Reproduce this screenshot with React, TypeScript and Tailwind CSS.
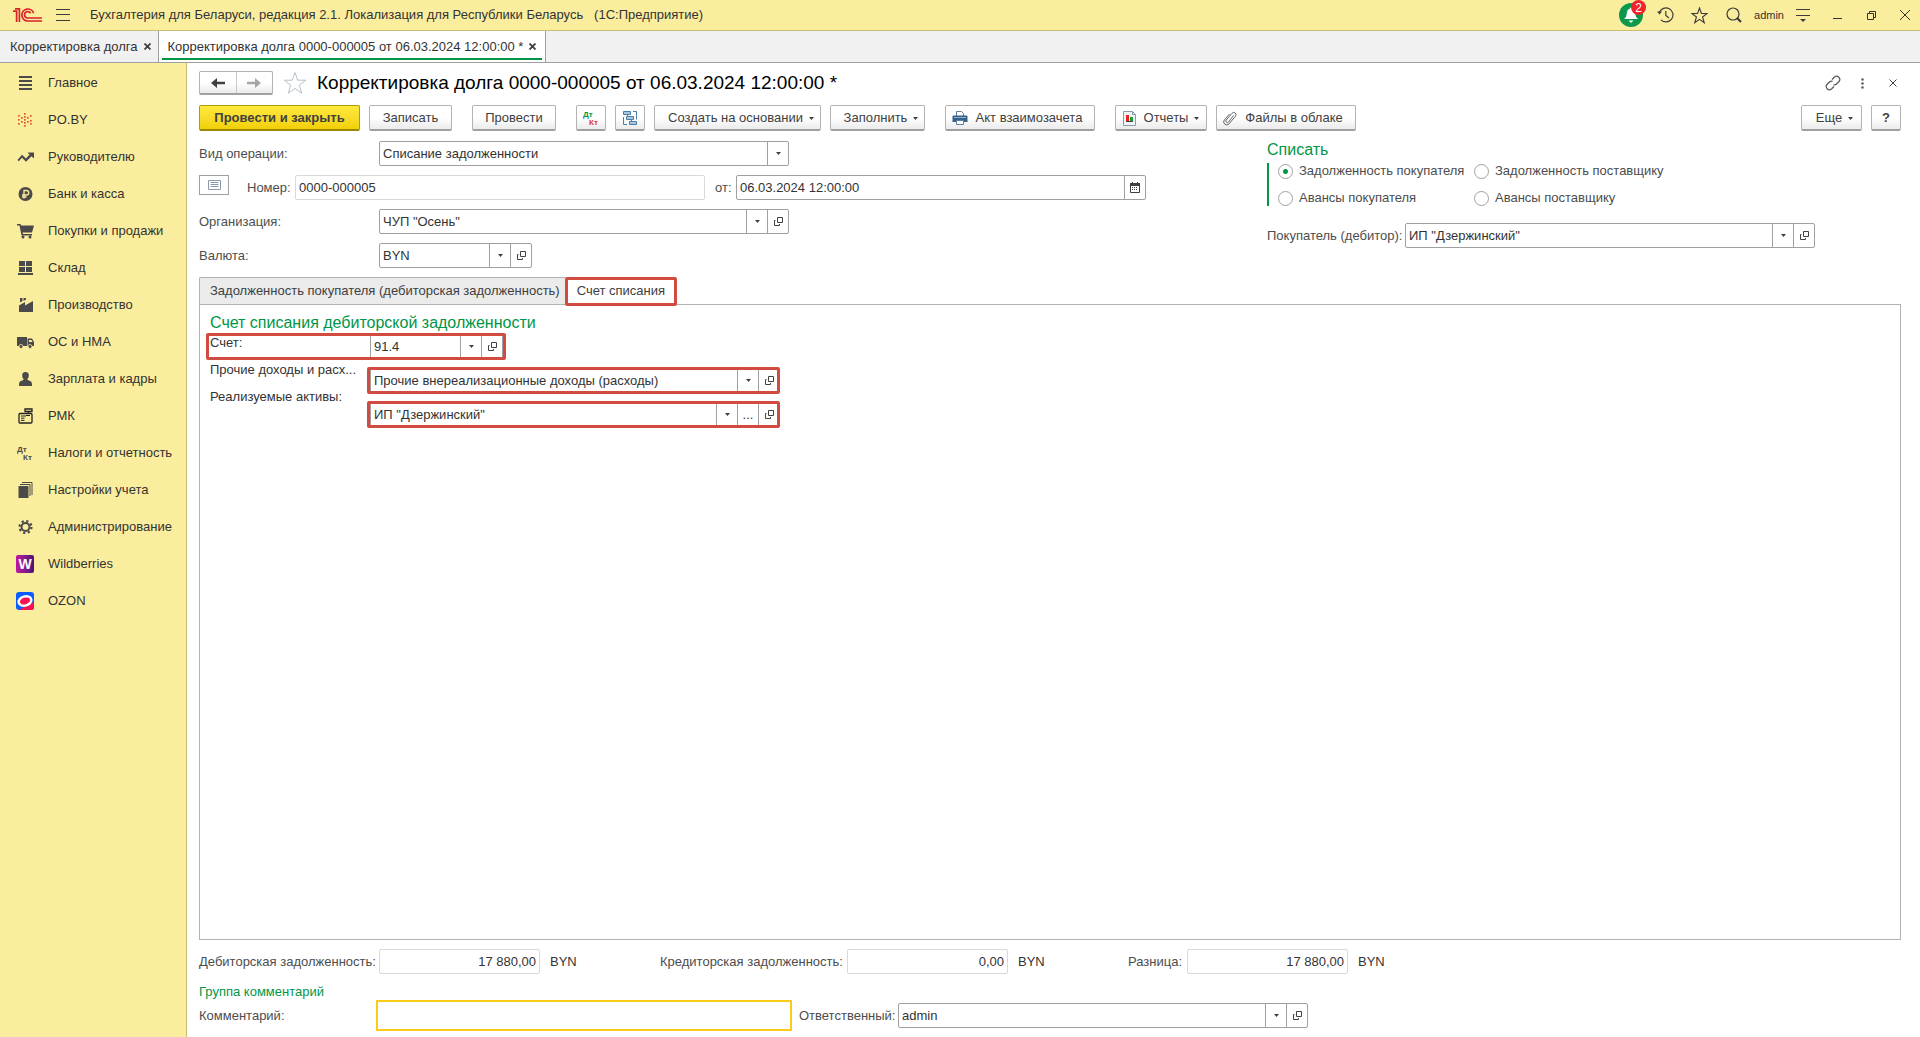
import React from 'react';
import clsx from 'clsx';

// ---------- icons ----------

const LogoIcon = () => (
  <svg width="31" height="16" viewBox="0 0 31 16" fill="none" stroke="#d8232a" strokeWidth="1.7">
    <path d="M1 4.2H4.6V15M3 1.8H7.4V15" />
    <path d="M21.6 6.2A6 6 0 1 0 15.6 14H30" />
    <path d="M18.6 6.4A3.2 3.2 0 1 0 15.6 11H30" />
  </svg>
);

const OpenIcon = () => (
  <svg width="11" height="11" viewBox="0 0 11 11" fill="none" stroke="#404040">
    <path d="M4.5 1.5h5v5h-5z" />
    <path d="M2.5 4.5h-1v5h5v-1.5" />
  </svg>
);

const ArrowDown = () => (
  <svg width="5" height="3" viewBox="0 0 5 3" fill="#404040">
    <path d="M0 0h5L2.5 3z" />
  </svg>
);

const CalendarIcon = () => (
  <svg width="10" height="11" viewBox="0 0 10 11">
    <path d="M.5 1.5h9v9h-9z" fill="none" stroke="#404040" />
    <path d="M0 1h10v3H0zM2 0h1v2H2zM7 0h1v2H7z" fill="#404040" />
    <path d="M2 5.5h6M2 7.5h6" stroke="#404040" strokeDasharray="1 1" />
  </svg>
);

const StarIcon = ({ size, color }: { size: number; color: string }) => (
  <svg width={size} height={size} viewBox="0 0 24 24" fill="none" stroke={color} strokeWidth={size > 20 ? 1 : 1.6}>
    <path d="M12 1.5L14.7 9.2H22.8L16.3 14.1L18.7 22.2L12 17.4L5.3 22.2L7.7 14.1L1.2 9.2H9.3Z" />
  </svg>
);

const BellIcon = () => (
  <svg width="16" height="18" viewBox="0 0 16 18" fill="#fff">
    <path d="M8 1.5q1.2 0 1.2 1.3Q12 3.6 12.2 7.500q.1 3.500 2.800 5.500H1q2.700-2 2.800-5.500Q4 3.600 6.800 2.800 6.800 1.500 8 1.500z" />
    <path d="M5.500 14.500h5L8 17z" />
  </svg>
);

const HistoryIcon = () => (
  <svg width="17" height="16" viewBox="0 0 17 16" fill="none" stroke="#3c3c3c" strokeWidth="1.2">
    <path d="M2.4 5.5A7 7 0 1 1 4 12.8" />
    <path d="M8.8 4v4.5l3.2 2.5" />
    <path d="M0 4.500h5L2.5 7.5z" fill="#3c3c3c" stroke="none" />
  </svg>
);

const SearchIcon = () => (
  <svg width="16" height="16" viewBox="0 0 16 16" fill="none" stroke="#3c3c3c" strokeWidth="1.2">
    <circle cx="7" cy="7" r="6" />
    <path d="M11 11l4 4" strokeWidth="2.2" />
  </svg>
);

const LinkIcon = () => (
  <svg width="16" height="16" viewBox="0 0 16 16" fill="none" stroke="#555" strokeWidth="1.2">
    <path d="M7 4.500L9.500 2a3.200 3.200 0 0 1 4.500 4.500L11.500 9q-1.500 1.300-3 .6" />
    <path d="M9 11.500L6.500 14A3.200 3.200 0 0 1 2 9.500L4.500 7q1.500-1.300 3-.6" />
  </svg>
);

const DtKtIcon = ({ top, bottom }: { top: string; bottom: string }) => (
  <svg width="17" height="16" viewBox="0 0 17 16" fontFamily="Liberation Sans, sans-serif" fontWeight="bold" fontSize="8">
    <text x="0" y="7" fill={top}>Дт</text>
    <text x="6" y="15" fill={bottom}>Кт</text>
  </svg>
);

const StructureIcon = () => (
  <svg width="16" height="16" viewBox="0 0 16 16" fill="#a9c6de" stroke="#4a7fab">
    <path d="M1.5 1.5h7v3h-7zM4.5 6.5h7v3h-7zM7.5 11.5h7v3h-7z" />
    <path d="M11 1.5h3.5v8M1.5 7v7.5H5" fill="none" />
    <path d="M5.5 4.5v2M9.500 9.5v2" />
  </svg>
);

const PrinterIcon = () => (
  <svg width="16" height="16" viewBox="0 0 16 16">
    <path d="M4.5 6V1.5h5l2 2V6" fill="#fff" stroke="#5c7f9e" />
    <path d="M1.5 5.5h13a1 1 0 0 1 1 1V12H.5V6.5a1 1 0 0 1 1-1z" fill="#33628c" />
    <path d="M2 7.5h12" stroke="#8fb0cc" />
    <path d="M4.5 10.5h7v4h-7z" fill="#fff" stroke="#5c7f9e" />
  </svg>
);

const ReportIcon = () => (
  <svg width="13" height="15" viewBox="0 0 13 15">
    <path d="M.5 .5h9l3 3v11H.5z" fill="#eef4f8" stroke="#8a9aa8" />
    <path d="M9.5 .5v3h3" fill="none" stroke="#8a9aa8" />
    <path d="M3 4h3v6H3z" fill="#f02020" />
    <path d="M7 6h3v4H7z" fill="#18a038" />
    <path d="M3 10.500h7" stroke="#444" />
  </svg>
);

const ClipIcon = () => (
  <svg width="14" height="15" viewBox="0 0 14 15" fill="none" stroke="#666">
    <path d="M10.500 4.500L5.500 11a1.500 1.500 0 0 1-2.300-2L9 2.300a2.200 2.200 0 0 1 3.500 2.900L6 12.800a3 3 0 0 1-4.600-3.900L6.500 3" />
  </svg>
);

const dots = [[6, 0], [6, 3], [6, 6], [6, 9], [6, 12], [3, 4], [3, 8], [9, 4], [9, 8], [0, 2], [0, 10], [12, 2], [12, 10], [12, 7], [0, 6]];

const sections: { title: string; icon: React.ReactNode }[] = [
  { title: 'Главное', icon: <path d="M2 1h13v2H2zM2 5h13v2H2zM2 9h13v2H2zM2 13h13v2H2z" /> },
  {
    title: 'PO.BY',
    icon: <g fill="#dd5a2c">{dots.map(([x, y]) => <rect key={`${x}-${y}`} x={x + 1} y={y + 1} width="1.7" height="1.7" />)}</g>,
  },
  {
    title: 'Руководителю',
    icon: <path d="M.5 11L5 5.800l4 3.700 3.500-4L10.500 3.500H17v6L14.500 7.300 9 12.700 5 8.800 1.800 12.200z" />,
  },
  {
    title: 'Банк и касса',
    icon: (
      <>
        <circle cx="8.5" cy="8" r="7" />
        <path d="M7 12.5V4.5h2.5a2.2 2.2 0 0 1 0 4.5H5M5 11h4.5" fill="none" stroke="#fbed9e" strokeWidth="1.3" />
      </>
    ),
  },
  {
    title: 'Покупки и продажи',
    icon: (
      <>
        <path d="M0 1h3.5l.6 1.5H17L15 9.5H5.5L6 11h9v1.5H4.5L2.5 2.5H0z" />
        <circle cx="6" cy="14" r="1.5" />
        <circle cx="13" cy="14" r="1.5" />
      </>
    ),
  },
  { title: 'Склад', icon: <path d="M2 1h6v5H2zM9 1h6v5H9zM2 7h6v5H2zM9 7h6v5H9zM1 13h15v2H1z" /> },
  { title: 'Производство', icon: <path d="M2 15V8.500l6-3.500v3.500L16 4v11zM3 1h2.500v3L3 5.500zM6.500 1H9v1.500L6.500 4z" /> },
  {
    title: 'ОС и НМА',
    icon: (
      <>
        <path d="M0 3h10v9H0zM10.5 4.5H15L17 8v4h-6.5z" />
        <path d="M12 6h2.5l1 2H12z" fill="#fbed9e" />
        <circle cx="4" cy="12.5" r="2" stroke="#fbed9e" strokeWidth=".8" />
        <circle cx="13" cy="12.5" r="2" stroke="#fbed9e" strokeWidth=".8" />
      </>
    ),
  },
  {
    title: 'Зарплата и кадры',
    icon: <path d="M8.5 1a3.3 3.3 0 0 1 3.300 3.500C11.800 6.500 10.800 8 10 8.500L14 10.500q1 .5 1 4.500H2q0-4 1-4.500L7 8.500C6.200 8 5.200 6.500 5.200 4.500A3.300 3.300 0 0 1 8.5 1z" />,
  },
  {
    title: 'РМК',
    icon: (
      <g fill="none" stroke="#222" strokeWidth="1.3">
        <rect x="2" y="5.500" width="13" height="9.500" rx="1" />
        <path d="M8 1h7v2.500H8zM11.500 3.500v2" />
        <path d="M4 8h5M4 10.200h3.500M4 12.400h3.500M9 7.500h4" strokeWidth="1" />
      </g>
    ),
  },
  { title: 'Налоги и отчетность', icon: null },
  {
    title: 'Настройки учета',
    icon: (
      <>
        <path d="M1.500 4h10v12h-10z" />
        <path d="M3 2.500h10V14M5 .5h10V13" fill="none" stroke="#4a4a4a" />
      </>
    ),
  },
  {
    title: 'Администрирование',
    icon: (
      <g fill="none" stroke="#4a4a4a">
        <circle cx="8.5" cy="8" r="4" strokeWidth="2" />
        <circle cx="8.5" cy="8" r="6" strokeWidth="2.2" strokeDasharray="2.2 2.512" />
      </g>
    ),
  },
  { title: 'Wildberries', icon: null },
  { title: 'OZON', icon: null },
];

function SectionIcon({ title, icon }: { title: string; icon: React.ReactNode }) {
  if (title === 'Налоги и отчетность') return <DtKtIcon top="#4a4a4a" bottom="#4a4a4a" />;
  if (title === 'Wildberries') {
    return (
      <span className="flex size-[18px] items-center justify-center rounded-xs bg-linear-to-r from-[#c3119f] to-[#4b1178] text-sm font-bold text-white">
        W
      </span>
    );
  }
  if (title === 'OZON') {
    return (
      <svg width="18" height="18" viewBox="0 0 18 18">
        <rect width="18" height="18" rx="3" fill="#0a5cff" />
        <path d="M3 18L18 10v5a3 3 0 0 1-3 3z" fill="#f91155" />
        <ellipse cx="9" cy="9" rx="6.5" ry="4.5" transform="rotate(-15 9 9)" fill="#f91155" stroke="#fff" strokeWidth="2.4" />
      </svg>
    );
  }
  return (
    <svg width="17" height="16" viewBox="0 0 17 16" fill="#4a4a4a">
      {icon}
    </svg>
  );
}

// ---------- controls ----------

type FieldButton = 'list' | 'more' | 'open' | 'calendar';

const buttonIcons: Record<FieldButton, React.ReactNode> = {
  list: <ArrowDown />,
  more: '...',
  open: <OpenIcon />,
  calendar: <CalendarIcon />,
};

const buttonLabels: Record<FieldButton, string> = {
  list: 'Выбрать из списка',
  more: 'Выбрать',
  open: 'Открыть',
  calendar: 'Календарь',
};

interface FieldProps {
  id: string;
  value: string;
  buttons?: FieldButton[];
  className?: string;
  readOnly?: boolean;
  right?: boolean;
}

function Field({ id, value, buttons = [], className, readOnly, right }: FieldProps) {
  return (
    <div className={clsx('flex h-[25px] rounded-xs border bg-white', readOnly ? 'border-[#d9d9d9]' : 'border-[#a0a0a0]', className)}>
      <input
        id={id}
        defaultValue={value}
        readOnly={readOnly}
        className={clsx('min-w-0 flex-1 bg-transparent px-[3px] text-[#333] outline-none', right && 'text-right')}
      />
      {buttons.map((b) => (
        <button key={b} type="button" aria-label={buttonLabels[b]} className="flex w-[21px] shrink-0 items-center justify-center border-l border-[#a0a0a0]">
          {buttonIcons[b]}
        </button>
      ))}
    </div>
  );
}

// red frame drawn over a field
const Highlight = ({ className }: { className: string }) => (
  <span className={clsx('pointer-events-none absolute -inset-y-px rounded-xs border-3 border-[#d14b40]', className)} />
);

interface ToolButtonProps {
  children: React.ReactNode;
  className?: string;
  menu?: boolean;
  primary?: boolean;
  label?: string;
}

function ToolButton({ children, className, menu, primary, label }: ToolButtonProps) {
  return (
    <button
      type="button"
      aria-label={label}
      className={clsx(
        'flex h-[26px] shrink-0 items-center justify-center rounded-xs border border-b-2 bg-linear-to-b pt-px text-[#404040]',
        primary
          ? 'border-[#b39b00] border-b-[#9c8700] from-[#ffe93c] to-[#f2d000] font-bold'
          : 'border-[#b3b3b3] border-b-[#a0a0a0] from-white from-50% to-[#ebebeb]',
        className,
      )}
    >
      {children}
      {menu && <span className="ml-[6px]"><ArrowDown /></span>}
    </button>
  );
}

function Radio({ label, checked }: { label: string; checked?: boolean }) {
  return (
    <label className="flex items-center gap-[6px]">
      <input
        type="radio"
        name="writeoff"
        defaultChecked={checked}
        className="size-[15px] appearance-none rounded-full border border-[#a0a0a0] bg-white checked:bg-[radial-gradient(circle,#009646_0_2px,#fff_3px)]"
      />
      {label}
    </label>
  );
}

// ---------- page ----------

function TitleBar() {
  return (
    <header className="flex h-[31px] items-center border-b border-[#c9bd72] bg-[#fbed9e] pr-[10px] pl-[12px] text-[#333]">
      <LogoIcon />
      <button type="button" aria-label="Главное меню" className="ml-[13px]">
        <svg width="14" height="12" viewBox="0 0 14 12" stroke="#3c3c3c">
          <path d="M0 .5h14M0 5.5h14M0 11.500h14" />
        </svg>
      </button>
      <h1 className="ml-5 whitespace-pre">Бухгалтерия для Беларуси, редакция 2.1. Локализация для Республики Беларусь   (1С:Предприятие)</h1>
      <div className="ml-auto flex items-center">
        <button type="button" aria-label="Уведомления" className="relative mr-[14px] flex size-6 items-center justify-center rounded-full bg-[#0b9a4b]">
          <BellIcon />
          <span className="absolute -top-[3px] -right-[3px] flex size-[15px] items-center justify-center rounded-full bg-[#f0222b] text-xs text-white">2</span>
        </button>
        <button type="button" aria-label="История" className="mr-[17px]"><HistoryIcon /></button>
        <button type="button" aria-label="Избранное" className="mr-[18px]"><StarIcon size={17} color="#3c3c3c" /></button>
        <button type="button" aria-label="Поиск" className="mr-[12px]"><SearchIcon /></button>
        <span className="mr-[12px] text-[11px]">admin</span>
        <button type="button" aria-label="Настройки" className="mr-[23px]">
          <svg width="14" height="14" viewBox="0 0 14 14" stroke="#3c3c3c">
            <path d="M0 1.5h14M0 7.5h14" />
            <path d="M4 11h6L7 14z" fill="#3c3c3c" stroke="none" />
          </svg>
        </button>
        <button type="button" aria-label="Свернуть" className="mr-[25px]">
          <svg width="9" height="10" viewBox="0 0 9 10"><path d="M0 8.5h9" stroke="#333" /></svg>
        </button>
        <button type="button" aria-label="Развернуть" className="mr-[24px]">
          <svg width="9" height="9" viewBox="0 0 9 9" fill="none" stroke="#333">
            <path d="M.5 2.5h6v6h-6zM2.5 2.5v-2h6v6h-2" />
          </svg>
        </button>
        <button type="button" aria-label="Закрыть">
          <svg width="10" height="10" viewBox="0 0 10 10"><path d="M0 0l10 10M10 0L0 10" stroke="#333" /></svg>
        </button>
      </div>
    </header>
  );
}

function CloseMark() {
  return (
    <button type="button" aria-label="Закрыть вкладку">
      <svg width="7" height="7" viewBox="0 0 7 7" stroke="#404040" strokeWidth="1.8">
        <path d="M.5 .5l6 6M6.5 .5l-6 6" />
      </svg>
    </button>
  );
}

function WindowTabs() {
  return (
    <nav className="flex h-8 border-b border-[#a0a0a0] bg-[#f1f1f1] text-[#333]">
      <div className="flex items-center gap-[6px] border-r border-[#a0a0a0] pr-[7px] pl-[10px]">
        <a href="#list">Корректировка долга</a>
        <CloseMark />
      </div>
      <div className="flex border-r border-[#a0a0a0] bg-white px-[3px]">
        <div className="mb-[2px] flex items-center gap-[6px] border-b-2 border-[#009646] px-[6px] pt-1">
          <a href="#doc">Корректировка долга 0000-000005 от 06.03.2024 12:00:00 *</a>
          <CloseMark />
        </div>
      </div>
    </nav>
  );
}

function Toolbar() {
  return (
    <div className="mt-[10px] flex">
      <ToolButton className="w-[161px]" primary>Провести и закрыть</ToolButton>
      <ToolButton className="ml-[9px] w-[83px]">Записать</ToolButton>
      <ToolButton className="ml-5 w-[84px]">Провести</ToolButton>
      <ToolButton className="ml-5 w-[30px]" label="Дт Кт"><DtKtIcon top="#009646" bottom="#e0393e" /></ToolButton>
      <ToolButton className="ml-[9px] w-[30px]" label="Структура подчиненности"><StructureIcon /></ToolButton>
      <ToolButton className="ml-[9px] w-[167px] pl-[7px]" menu>Создать на основании</ToolButton>
      <ToolButton className="ml-[9px] w-[95px] pl-[7px]" menu>Заполнить</ToolButton>
      <ToolButton className="ml-5 w-[150px] gap-2 pr-[6px]"><PrinterIcon />Акт взаимозачета</ToolButton>
      <ToolButton className="ml-5 w-[92px]" menu><span className="mr-2"><ReportIcon /></span>Отчеты</ToolButton>
      <ToolButton className="ml-[9px] w-[140px] gap-2 pr-[6px]"><ClipIcon />Файлы в облаке</ToolButton>
      <ToolButton className="ml-auto w-[61px] pl-[6px]" menu>Еще</ToolButton>
      <ToolButton className="ml-[9px] w-[30px] font-bold">?</ToolButton>
    </div>
  );
}

function DocumentFields() {
  return (
    <div className="mt-[10px] flex">
      <div className="flex flex-1 flex-col gap-[9px]">
        <div className="flex items-center">
          <label htmlFor="kind" className="w-[180px]">Вид операции:</label>
          <Field id="kind" value="Списание задолженности" buttons={['list']} className="w-[410px]" />
        </div>
        <div className="flex items-center">
          <button type="button" aria-label="Показать" className="mb-[5px] flex h-5 w-[30px] items-center justify-center border border-[#a0a0a0]">
            <svg width="13" height="10" viewBox="0 0 13 10" fill="none" stroke="#8c99ad">
              <path d="M.5 .5h12v9H.5zM2.5 2.5h8M2.5 4.5h8M2.5 6.5h8" />
            </svg>
          </button>
          <label htmlFor="number" className="ml-[18px] w-12">Номер:</label>
          <Field id="number" value="0000-000005" className="w-[410px]" readOnly />
          <label htmlFor="date" className="ml-[10px] w-[21px]">от:</label>
          <Field id="date" value="06.03.2024 12:00:00" buttons={['calendar']} className="w-[410px]" />
        </div>
        <div className="flex items-center">
          <label htmlFor="org" className="w-[180px]">Организация:</label>
          <Field id="org" value={'ЧУП "Осень"'} buttons={['list', 'open']} className="w-[410px]" />
        </div>
        <div className="flex items-center">
          <label htmlFor="currency" className="w-[180px]">Валюта:</label>
          <Field id="currency" value="BYN" buttons={['list', 'open']} className="w-[153px]" />
        </div>
      </div>

      <div className="w-[634px]">
        <h3 className="mb-1 text-base leading-[18px] text-[#009646]">Списать</h3>
        <div className="grid h-[43px] w-[420px] grid-cols-[196px_auto] content-between border-l-2 border-[#009646] pl-[9px]">
          <Radio label="Задолженность покупателя" checked />
          <Radio label="Задолженность поставщику" />
          <Radio label="Авансы покупателя" />
          <Radio label="Авансы поставщику" />
        </div>
        <div className="mt-[17px] flex items-center">
          <label htmlFor="buyer" className="w-[138px]">Покупатель (дебитор):</label>
          <Field id="buyer" value={'ИП "Дзержинский"'} buttons={['list', 'open']} className="w-[410px]" />
        </div>
      </div>
    </div>
  );
}

function AccountPanel() {
  return (
    <section className="flex flex-1 flex-col">
      <div role="tablist" className="mt-[9px] flex h-7 items-start">
        <button type="button" role="tab" className="h-full rounded-tl-xs border border-r-0 border-[#b3b3b3] bg-[#ebebeb] pr-[5px] pl-[10px] text-[#404040]">
          Задолженность покупателя (дебиторская задолженность)
        </button>
        <button type="button" role="tab" aria-selected className="z-10 h-[29px] rounded-xs border-3 border-[#d14b40] bg-white px-[9px] pb-[2px] text-[#404040]">
          Счет списания
        </button>
      </div>
      <div className="-mt-px flex-1 border border-[#b3b3b3] px-[6px] text-[#333]">
        <h3 className="mt-[7px] ml-1 text-base leading-[22px] text-[#009646]">Счет списания дебиторской задолженности</h3>
        <div className="flex">
          <div className="w-41 pl-1 leading-[18px]">
            <label htmlFor="account" className="block h-[27px]">Счет:</label>
            <label htmlFor="income" className="block h-[27px]">Прочие доходы и расх...</label>
            <label htmlFor="assets" className="block h-[27px]">Реализуемые активы:</label>
          </div>
          <div className="flex flex-col gap-[9px]">
            <div className="relative w-[133px]">
              <Field id="account" value="91.4" buttons={['list', 'open']} />
              <Highlight className="-left-41 -right-[3px]" />
            </div>
            <div className="relative w-[410px]">
              <Field id="income" value="Прочие внереализационные доходы (расходы)" buttons={['list', 'open']} />
              <Highlight className="-left-[3px] right-0" />
            </div>
            <div className="relative w-[410px]">
              <Field id="assets" value={'ИП "Дзержинский"'} buttons={['list', 'more', 'open']} />
              <Highlight className="-left-[3px] right-0" />
            </div>
          </div>
        </div>
      </div>
    </section>
  );
}

function Footer() {
  return (
    <footer className="pb-[6px]">
      <div className="mt-[9px] flex items-center">
        <label htmlFor="debit" className="w-[180px]">Дебиторская задолженность:</label>
        <Field id="debit" value="17 880,00" className="w-[161px]" readOnly right />
        <span className="ml-[10px] w-[110px] text-[#333]">BYN</span>
        <label htmlFor="credit" className="w-[187px]">Кредиторская задолженность:</label>
        <Field id="credit" value="0,00" className="w-[161px]" readOnly right />
        <span className="ml-[10px] w-[110px] text-[#333]">BYN</span>
        <label htmlFor="diff" className="w-[59px]">Разница:</label>
        <Field id="diff" value="17 880,00" className="w-[161px]" readOnly right />
        <span className="ml-[10px] text-[#333]">BYN</span>
      </div>
      <h4 className="mt-[10px] text-[#009646]">Группа комментарий</h4>
      <div className="flex items-center">
        <label htmlFor="comment" className="w-[177px]">Комментарий:</label>
        <input id="comment" className="h-[31px] w-[416px] border-2 border-[#fbcb1a] px-1 outline-none" />
        <label htmlFor="owner" className="ml-[7px] w-[99px]">Ответственный:</label>
        <Field id="owner" value="admin" buttons={['list', 'open']} className="w-[410px]" />
      </div>
    </footer>
  );
}

export default function App() {
  return (
    <div className="flex min-h-screen flex-col bg-white font-['Liberation_Sans',Arial,sans-serif] text-[13px] leading-4 text-[#4d4d4d]">
      <TitleBar />
      <WindowTabs />
      <div className="flex flex-1">
        <aside className="w-[187px] shrink-0 border-r border-[#c9bd72] bg-[#fbed9e] pt-px text-[#333]">
          {sections.map((s) => (
            <a key={s.title} href="#section" className="flex h-[37px] items-center">
              <span className="flex w-12 items-center justify-center pl-[2px]"><SectionIcon {...s} /></span>
              {s.title}
            </a>
          ))}
        </aside>

        <main className="flex min-w-0 flex-1 flex-col pr-[19px] pl-3">
          <div className="mt-2 flex h-6 items-center">
            <div className="flex h-6 w-[74px] rounded-xs border border-b-2 border-[#b3b3b3] border-b-[#a0a0a0] bg-linear-to-b from-white from-50% to-[#ebebeb]">
              <button type="button" aria-label="Назад" className="flex flex-1 items-center justify-center border-r border-[#c8c8c8]">
                <svg width="14" height="10" viewBox="0 0 14 10"><path d="M0 5L6 0v3.8h8v2.4H6V10z" fill="#404040" /></svg>
              </button>
              <button type="button" aria-label="Вперед" className="flex flex-1 items-center justify-center">
                <svg width="14" height="10" viewBox="0 0 14 10"><path d="M14 5L8 0v3.8H0v2.4h8V10z" fill="#a6a6a6" /></svg>
              </button>
            </div>
            <button type="button" aria-label="В избранное" className="ml-[10px]"><StarIcon size={24} color="#b8c0c8" /></button>
            <h2 className="ml-[10px] text-[19px] leading-6 text-black">Корректировка долга 0000-000005 от 06.03.2024 12:00:00 *</h2>
            <div className="ml-auto flex items-center pr-1">
              <button type="button" aria-label="Ссылка"><LinkIcon /></button>
              <button type="button" aria-label="Еще действия" className="ml-5">
                <svg width="3" height="11" viewBox="0 0 3 11" fill="#606060">
                  <circle cx="1.5" cy="1.5" r="1.3" />
                  <circle cx="1.5" cy="5.5" r="1.3" />
                  <circle cx="1.5" cy="9.5" r="1.3" />
                </svg>
              </button>
              <button type="button" aria-label="Закрыть документ" className="ml-[25px]">
                <svg width="8" height="8" viewBox="0 0 8 8" stroke="#404040"><path d="M.5 .5l7 7M7.5 .5l-7 7" /></svg>
              </button>
            </div>
          </div>
          <Toolbar />
          <DocumentFields />
          <AccountPanel />
          <Footer />
        </main>
      </div>
    </div>
  );
}
